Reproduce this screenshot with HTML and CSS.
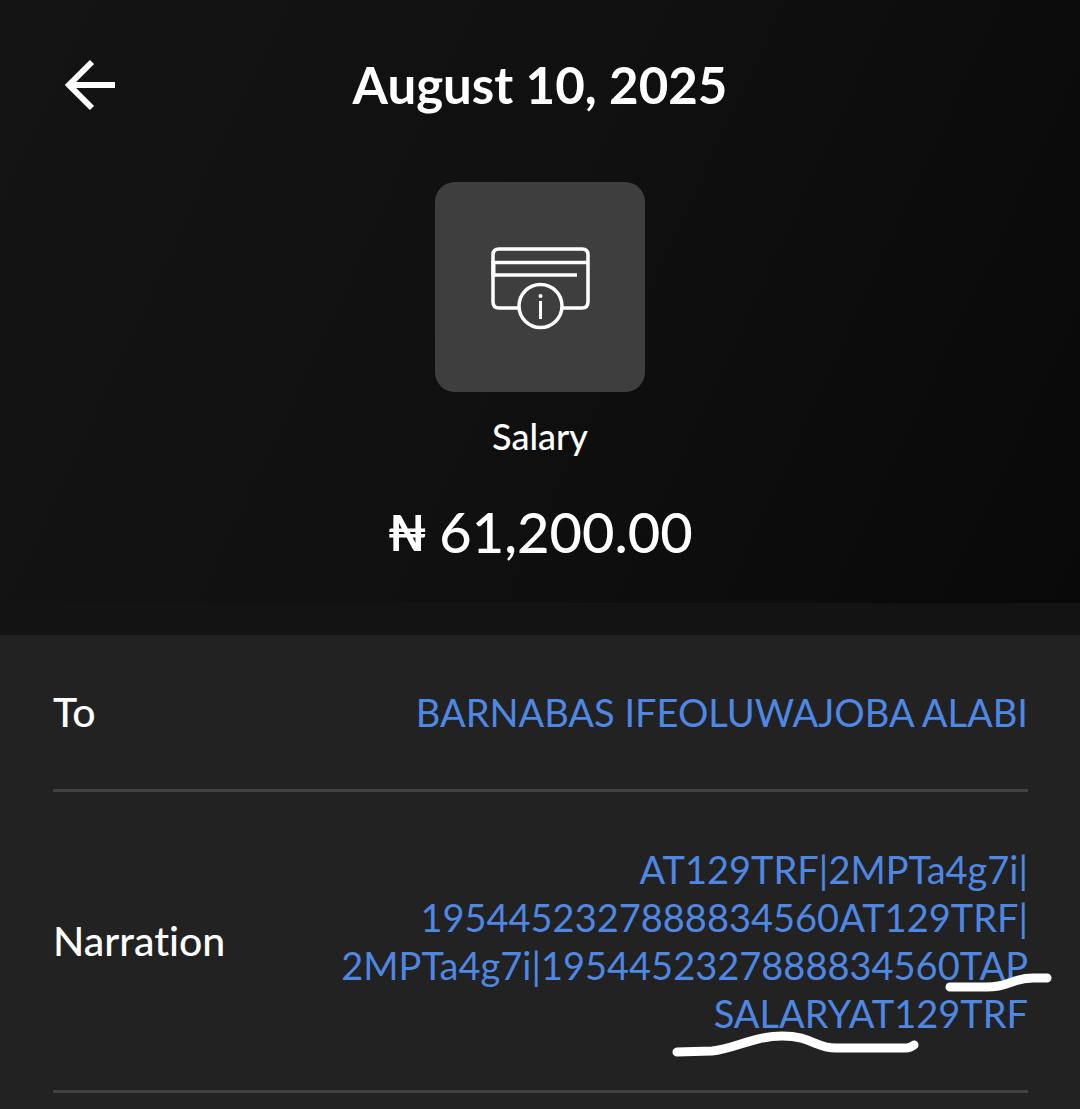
FILE: index.html
```html
<!DOCTYPE html>
<html lang="en">
<head>
<meta charset="utf-8">
<meta name="viewport" content="width=device-width, initial-scale=1">
<title>Transaction details</title>
<link rel="stylesheet" href="styles.css">
</head>
<body>
<main class="page">
  <section class="hero">
    <header class="topbar">
      <button class="back" type="button" aria-label="Back">
        <svg width="52" height="52" viewBox="0 0 52 52" fill="none" stroke="currentColor" stroke-width="6" aria-hidden="true">
          <path d="M51 26H6M28 3 5 26l23 23"/>
        </svg>
      </button>
      <h1 class="date">August 10, 2025</h1>
    </header>
    <div class="tile">
      <svg class="card-icon" width="100" height="82" viewBox="0 0 100 82" fill="none" stroke="currentColor" stroke-width="3.500" aria-hidden="true">
        <path d="M28 62H9q-6 0-6-6V9q0-6 6-6h83q6 0 6 6v47q0 6-6 6H73"/>
        <path d="M3 16.500h95M3 29h84"/>
        <path d="M3.500 15v15.500" stroke-width="4"/>
        <circle cx="50.500" cy="60" r="21.500"/>
        <path d="M50.500 55v18" stroke-width="3"/>
        <circle cx="50.500" cy="50" r="2" fill="currentColor" stroke="none"/>
      </svg>
    </div>
    <p class="category">Salary</p>
    <p class="amount"><span class="currency">₦</span><span>61,200.00</span></p>
  </section>
  <dl class="details">
    <div class="row">
      <dt class="label">To</dt>
      <dd class="value">BARNABAS IFEOLUWAJOBA ALABI</dd>
    </div>
    <div class="row">
      <dt class="label">Narration</dt>
      <dd class="value">AT129TRF|2MPTa4g7i|<wbr>1954452327888834560AT129TRF|<wbr>2MPTa4g7i|1954452327888834560TAP SALARYAT129TRF
        <svg class="marker" width="384" height="92" viewBox="0 0 384 92" fill="none" stroke="currentColor" stroke-width="9" stroke-linecap="round" stroke-linejoin="round" aria-hidden="true">
          <path d="M279 18h37c22 0 25-9 46-9h14"/>
          <path d="M6 83l35-1c22-2 42-15 70-15 30 0 33 12 54 12h70q4 0 8-3"/>
        </svg>
      </dd>
    </div>
  </dl>
</main>
</body>
</html>
```
FILE: styles.css
```css
* {
  box-sizing: border-box;
}

body {
  margin: 0;
  background: #222;
  color: #fff;
  font-family: Lato, "Liberation Sans", sans-serif;
  font-variant-ligatures: none;
}

.page {
  display: flex;
  flex-direction: column;
}

.hero {
  display: flex;
  flex-direction: column;
  align-items: center;
  padding: 53px 64px 39px;
  background: linear-gradient(115deg, #141414 0%, #101010 50%, #090909 100%);
}

.topbar {
  display: grid;
  grid-template-columns: 52px 1fr 52px;
  align-items: center;
  width: 100%;
  height: 64px;
}

.back {
  display: flex;
  padding: 0;
  border: 0;
  background: none;
  color: inherit;
}

.date {
  margin: 0;
  font-size: 51px;
  line-height: 64px;
  font-weight: 700;
  text-align: center;
}

.tile {
  display: flex;
  align-items: center;
  justify-content: center;
  width: 210px;
  height: 210px;
  margin-top: 65px;
  border-radius: 20px;
  background: #3e3e3e;
}

.card-icon {
  overflow: visible;
}

.category {
  margin: 20px 0 0;
  font-size: 36px;
  line-height: 48px;
  font-weight: 500;
}

.amount {
  display: flex;
  gap: 12px;
  margin: 40px 0 0;
  font-size: 56px;
  line-height: 64px;
  font-weight: 500;
}

.currency {
  font-size: 50px;
  font-weight: 700;
}

.details {
  margin: 0;
  border-top: 32px solid #131313;
}

.row {
  display: flex;
  align-items: center;
  justify-content: space-between;
  gap: 48px;
  margin: 0 52px 0 53px;
  padding: 53px 0;
  border-bottom: 3px solid #414141;
}

.label {
  font-size: 41px;
  line-height: 48px;
  font-weight: 500;
}

.value {
  position: relative;
  max-width: 700px;
  margin: 0;
  color: #4f87e4;
  font-size: 38px;
  line-height: 48px;
  text-align: right;
}

.marker {
  position: absolute;
  right: -27px;
  bottom: -24px;
  color: #fff;
}
```
